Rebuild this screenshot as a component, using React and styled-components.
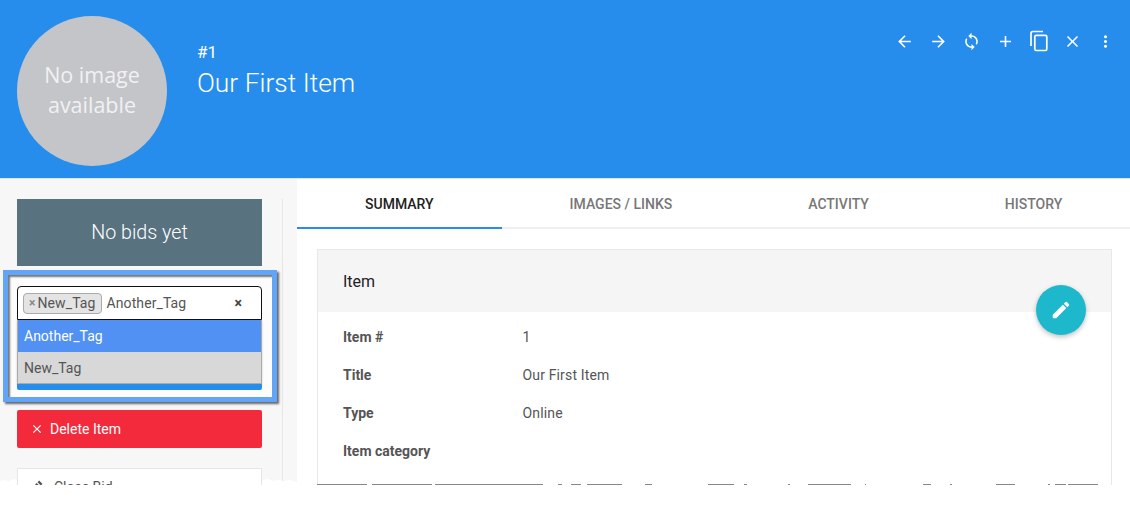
import styled, { createGlobalStyle } from "styled-components";
import { MdArrowBack, MdArrowForward, MdSync, MdAdd, MdClose, MdMoreVert, MdEdit, MdGavel } from "react-icons/md";

const GlobalStyles = createGlobalStyle`
  html, body {
    margin: 0;
    padding: 0;
    background: #fff;
    font-family: Roboto, "Liberation Sans", sans-serif;
  }
`;

const Page = styled.div`
  position: relative;
  width: 1130px;
  height: 514px;
  overflow: hidden;
  background: #fff;
`;

const Clip = styled.div`
  height: 485px;
  overflow: hidden;
`;

const Header = styled.header`
  display: flex;
  align-items: flex-start;
  height: 178px;
  background: #278ded;
  border-bottom: 1px solid #e4e4e4;
  color: #fff;
`;

const Avatar = styled.div`
  flex: none;
  display: flex;
  align-items: center;
  justify-content: center;
  width: 150px;
  height: 148px;
  padding-bottom: 2px;
  margin: 16px 30px 0 17px;
  border-radius: 50%;
  background: #c3c5c9;
  color: #f1f1f3;
  font-family: "Open Sans", sans-serif;
  font-size: 21.5px;
  line-height: 30px;
  text-align: center;
`;

const Titles = styled.div`
  padding-top: 42px;
`;

const ItemNumber = styled.div`
  font-size: 17px;
  line-height: 20px;
`;

const ItemTitle = styled.h1`
  margin: 4px 0 0;
  font-size: 26.4px;
  line-height: 34px;
  font-weight: 300;
`;

const Toolbar = styled.div`
  display: flex;
  margin: 24px 7.5px 0 auto;
`;

const ToolButton = styled.button`
  display: flex;
  align-items: center;
  justify-content: center;
  width: 33.5px;
  height: 34px;
  padding: 0;
  border: 0;
  background: none;
  color: #fff;
`;

const Body = styled.div`
  display: flex;
`;

const Sidebar = styled.aside`
  flex: none;
  width: 297px;
  box-sizing: border-box;
  padding: 20px 0 0 17px;
  background: #f7f7f7;
`;

const SidebarInner = styled.div`
  width: 266px;
  height: 320px;
  box-sizing: border-box;
  padding-right: 20px;
  border-right: 1px solid #e6e6e6;
`;

const BidStatus = styled.div`
  display: flex;
  align-items: center;
  justify-content: center;
  height: 67px;
  background: #587280;
  color: #fff;
  font-size: 19.7px;
  font-weight: 300;
`;

const TourHighlight = styled.div`
  width: 274px;
  height: 132px;
  box-sizing: border-box;
  margin: 4px 0 0 -14px;
  padding: 11px 0 0 9px;
  border: 5px solid #62a4f5;
  background: #fcfcfc;
  box-shadow: 2px 2px 2px #666, inset 2px 2px 2px #777;
`;

const TagBox = styled.div`
  display: flex;
  align-items: center;
  width: 245px;
  height: 34px;
  box-sizing: border-box;
  padding: 0 5px;
  border: 1px solid #111;
  border-radius: 4px 4px 0 0;
  background: #fff;
  color: #555;
  font-size: 14px;
  letter-spacing: 0.1px;
`;

const Tag = styled.span`
  display: flex;
  align-items: center;
  height: 21px;
  box-sizing: border-box;
  padding: 0 5px;
  border: 1px solid #aaa;
  border-radius: 4px;
  background: #e4e4e4;
  color: #555;
`;

const TagRemove = styled.span`
  margin-right: 2px;
  color: #888;
  font-weight: 700;
  font-size: 12px;
`;

const TagInput = styled.span`
  margin-left: 5px;
`;

const ClearAll = styled.span`
  margin: 0 14px 0 auto;
  color: #444;
  font-weight: 700;
  font-size: 14px;
`;

const Options = styled.div`
  width: 245px;
  box-sizing: border-box;
  border: solid #aaa;
  border-width: 0 1px 1px;
  box-shadow: 0 1px 2px rgba(0, 0, 0, 0.2);
`;

const Option = styled.div`
  display: flex;
  align-items: center;
  height: ${(p) => (p.$active ? "32px" : "31px")};
  padding-left: 6px;
  background: ${(p) => (p.$active ? "#5091f3" : "#d8d8d8")};
  color: ${(p) => (p.$active ? "#fff" : "#555")};
  font-size: 14px;
`;

const ButtonPeek = styled.div`
  width: 245px;
  height: 6px;
  border-radius: 0 0 2px 2px;
  background: #278ded;
`;

const DeleteButton = styled.button`
  display: flex;
  align-items: center;
  gap: 6px;
  width: 245px;
  height: 38px;
  margin-top: 8px;
  padding: 0 0 0 13px;
  border: 0;
  border-radius: 2px;
  background: #f32a3c;
  color: #fff;
  font-family: inherit;
  font-size: 14px;
`;

const ActionCard = styled.div`
  display: flex;
  align-items: center;
  gap: 8px;
  width: 245px;
  height: 38px;
  box-sizing: border-box;
  margin-top: 20px;
  padding-left: 14px;
  border: 1px solid #e6e6e6;
  background: #fff;
  color: #555;
  font-size: 14px;
`;

const Main = styled.main`
  flex: 1;
  min-width: 0;
`;

const Tabs = styled.nav`
  display: flex;
  height: 50px;
  box-sizing: border-box;
  border-bottom: 2px solid #eee;
`;

const Tab = styled.div`
  display: flex;
  align-items: center;
  justify-content: center;
  height: 50px;
  box-sizing: border-box;
  padding: 2px 68px 0;
  border-bottom: 2px solid ${(p) => (p.$active ? "#278ded" : "transparent")};
  color: ${(p) => (p.$active ? "#222" : "#777")};
  font-size: 14px;
  font-weight: 500;
  white-space: nowrap;
`;

const Content = styled.div`
  padding: 20px 18px 0 20px;
`;

const Panel = styled.section`
  position: relative;
  border: 1px solid #e8e8e8;
`;

const PanelHeading = styled.div`
  display: flex;
  align-items: center;
  height: 62px;
  padding-left: 25px;
  background: #f5f5f5;
  color: #222;
  font-size: 16px;
`;

const PanelBody = styled.div`
  min-height: 300px;
  padding: 6px 25px 0;
`;

const Row = styled.div`
  display: flex;
  align-items: center;
  height: 38px;
  font-size: 14px;
  color: #555;
`;

const Label = styled.div`
  width: 179.5px;
  font-weight: 700;
`;

const Value = styled.div`
  letter-spacing: 0.15px;
`;

const Fab = styled.button`
  position: absolute;
  top: 35px;
  right: 25px;
  display: flex;
  align-items: center;
  justify-content: center;
  width: 50px;
  height: 50px;
  padding: 0;
  border: 0;
  border-radius: 50%;
  background: #1eb8cc;
  color: #fff;
  box-shadow: 0 2px 5px rgba(0, 0, 0, 0.25);
`;

const TornEdge = styled.svg`
  position: absolute;
  left: 0;
  top: 476px;
  display: block;
`;

const dashes = [
  [317, 367], [372, 432], [435, 543], [558, 562], [571, 581], [587, 622], [645, 652],
  [708, 734], [744, 747], [788, 790], [808, 851], [865, 866], [923, 931], [950, 952],
  [996, 1015], [1048, 1050], [1055, 1066], [1068, 1098],
];

const CopyIcon = () => (
  <svg width="20" height="22" viewBox="0 0 20 22" fill="none" stroke="currentColor" strokeWidth="1.7">
    <path d="M2 16V3.5C2 2.1 2.6 1.5 4 1.5H14" />
    <rect x="5.8" y="5.3" width="12" height="15.2" rx="1.4" />
  </svg>
);

const App = () => {
  return (
    <>
      <GlobalStyles />
      <Page>
        <Clip>
          <Header>
            <Avatar>
              No image
              <br />
              available
            </Avatar>
            <Titles>
              <ItemNumber>#1</ItemNumber>
              <ItemTitle>Our First Item</ItemTitle>
            </Titles>
            <Toolbar>
              <ToolButton><MdArrowBack size={19} /></ToolButton>
              <ToolButton><MdArrowForward size={19} /></ToolButton>
              <ToolButton><MdSync size={19} /></ToolButton>
              <ToolButton><MdAdd size={19} /></ToolButton>
              <ToolButton><CopyIcon /></ToolButton>
              <ToolButton><MdClose size={19} /></ToolButton>
              <ToolButton><MdMoreVert size={19} /></ToolButton>
            </Toolbar>
          </Header>
          <Body>
            <Sidebar>
              <SidebarInner>
                <BidStatus>No bids yet</BidStatus>
                <TourHighlight>
                  <TagBox>
                    <Tag>
                      <TagRemove>×</TagRemove>
                      New_Tag
                    </Tag>
                    <TagInput>Another_Tag</TagInput>
                    <ClearAll>×</ClearAll>
                  </TagBox>
                  <Options>
                    <Option $active>Another_Tag</Option>
                    <Option>New_Tag</Option>
                  </Options>
                  <ButtonPeek />
                </TourHighlight>
                <DeleteButton>
                  <MdClose size={14} />
                  Delete Item
                </DeleteButton>
                <ActionCard>
                  <MdGavel size={14} />
                  Close Bid
                </ActionCard>
              </SidebarInner>
            </Sidebar>
            <Main>
              <Tabs>
                <Tab $active>SUMMARY</Tab>
                <Tab>IMAGES / LINKS</Tab>
                <Tab>ACTIVITY</Tab>
                <Tab>HISTORY</Tab>
              </Tabs>
              <Content>
                <Panel>
                  <PanelHeading>Item</PanelHeading>
                  <Fab><MdEdit size={22} /></Fab>
                  <PanelBody>
                    <Row><Label>Item #</Label><Value>1</Value></Row>
                    <Row><Label>Title</Label><Value>Our First Item</Value></Row>
                    <Row><Label>Type</Label><Value>Online</Value></Row>
                    <Row><Label>Item category</Label></Row>
                  </PanelBody>
                </Panel>
              </Content>
            </Main>
          </Body>
        </Clip>
        {/* torn bottom edge of the screenshot */}
        <TornEdge width="1130" height="38" viewBox="0 476 1130 38">
          <polygon
            fill="#fff"
            points="0,481 4,480 9,481 13,479 17,480 17,485 262,485 262,480 268,479 273,481 278,480 284,481 290,480 297,482 317,485 1130,485 1130,514 0,514"
          />
          {dashes.map(([a, b]) => (
            <line key={a} x1={a} x2={b} y1="484.5" y2="484.5" stroke="#888" strokeWidth="1" />
          ))}
        </TornEdge>
      </Page>
    </>
  );
};

export default App;
